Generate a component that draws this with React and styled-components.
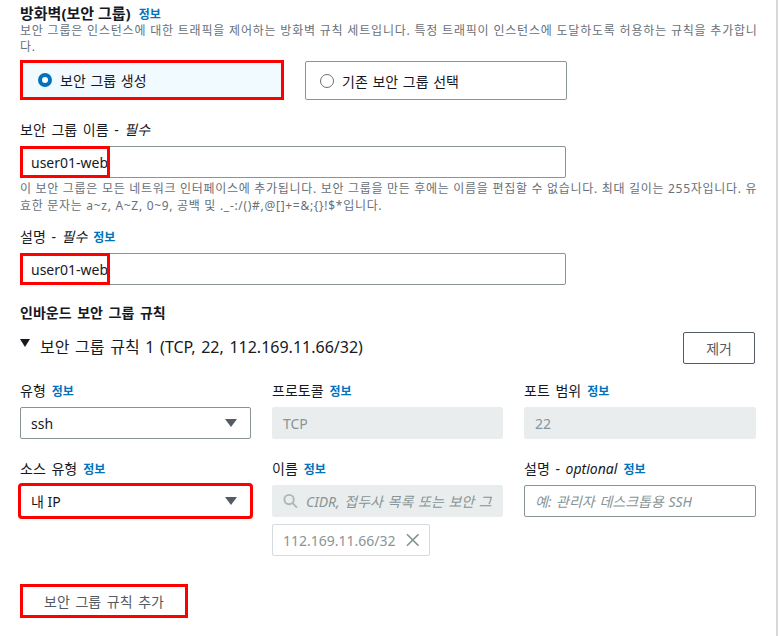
import React from 'react';
import styled, { createGlobalStyle } from 'styled-components';

const GlobalStyle = createGlobalStyle`
  html, body {
    margin: 0;
    padding: 0;
    background: #ffffff;
  }
  body {
    font-family: "Noto Sans", "Noto Sans CJK KR", sans-serif;
    color: #16191f;
  }
`;

const Page = styled.div`
  width: 778px;
  min-height: 636px;
  padding: 3px 0 0 20px;
  box-sizing: border-box;
  border-right: 2px solid #d5dbdb;
`;

const Content = styled.div`
  width: 736px;
`;

const Title = styled.h2`
  margin: 0;
  font-size: 15px;
  line-height: 20px;
  font-weight: 700;
`;

const Info = styled.a`
  color: #0073bb;
  font-size: 12px;
  line-height: 1;
  font-weight: 700;
  font-style: normal;
  margin-left: ${(p) => p.gap || 6}px;
  text-decoration: none;
  word-spacing: 0;
`;

const Desc = styled.p`
  margin: 0;
  font-size: 12px;
  line-height: ${(p) => p.lh || 16}px;
  letter-spacing: ${(p) => p.ls || 0.8}px;
  color: #687078;
  white-space: nowrap;
`;

const TileRow = styled.div`
  display: flex;
  gap: 21px;
  margin-top: 5px;
`;

const Tile = styled.label`
  display: flex;
  align-items: center;
  gap: 8px;
  box-sizing: border-box;
  width: ${(p) => (p.selected ? 264 : 262)}px;
  height: ${(p) => (p.selected ? 40 : 39)}px;
  margin-top: ${(p) => (p.selected ? 0 : 1)}px;
  padding-left: ${(p) => (p.selected ? 15 : 14)}px;
  font-size: 14px;
  word-spacing: 1px;
  background: ${(p) => (p.selected ? '#f1faff' : '#ffffff')};
  border: ${(p) => (p.marked ? '3px solid #ff0000' : '1px solid #879596')};
  border-radius: ${(p) => (p.marked ? 0 : 2)}px;
`;

const Radio = styled.span`
  width: 14px;
  height: 14px;
  border-radius: 50%;
  box-sizing: border-box;
  flex-shrink: 0;
  background: #ffffff;
  border: ${(p) => (p.checked ? '4px solid #0073bb' : '1px solid #687078')};
`;

const Field = styled.div`
  margin-top: ${(p) => p.top || 0}px;
`;

const Label = styled.div`
  font-size: 14px;
  line-height: 20px;
  height: 20px;
  word-spacing: 2px;
  white-space: nowrap;

  em {
    font-style: italic;
  }
`;

const InputBox = styled.div`
  position: relative;
  box-sizing: border-box;
  width: ${(p) => p.width || '100%'};
  height: 32px;
  margin-top: 6px;
  display: flex;
  align-items: center;
  gap: 8px;
  padding: 0 10px;
  font-size: 14px;
  border-radius: 2px;
  border: 1px solid ${(p) => (p.disabled ? '#eaeded' : '#879596')};
  background: ${(p) => (p.disabled ? '#eaeded' : '#ffffff')};
  color: ${(p) => (p.disabled ? '#879596' : '#16191f')};
  outline: ${(p) => (p.marked ? '3px solid #ff0000' : 'none')};
  outline-offset: -1px;
`;

const Placeholder = styled.span`
  font-style: italic;
  color: #879596;
  white-space: nowrap;
  overflow: hidden;
  word-spacing: 1px;
`;

const Mark = styled.span`
  position: absolute;
  left: -1px;
  top: -1px;
  width: ${(p) => p.w}px;
  height: 32px;
  box-sizing: border-box;
  border: 3px solid #ff0000;
`;

const Caret = styled.span`
  margin-left: auto;
  width: 0;
  height: 0;
  border-left: 6px solid transparent;
  border-right: 6px solid transparent;
  border-top: 8px solid #545b64;
  margin-right: 3px;
`;

const Section = styled.div`
  margin-top: 18px;
  font-size: 14px;
  line-height: 20px;
  font-weight: 600;
  word-spacing: 2px;
`;

const RuleHeader = styled.div`
  display: flex;
  align-items: center;
  margin-top: 9px;
  height: 32px;
`;

const RuleTitle = styled.div`
  display: flex;
  align-items: center;
  font-size: 16px;
  gap: 10px;
  word-spacing: 1.5px;
  margin-top: -5px;
`;

const Triangle = styled.span`
  width: 0;
  height: 0;
  border-left: 5px solid transparent;
  border-right: 5px solid transparent;
  border-top: 8px solid #16191f;
  margin-top: -6px;
`;

const Button = styled.button`
  box-sizing: border-box;
  height: ${(p) => (p.marked ? 34 : 32)}px;
  padding: 0 ${(p) => (p.marked ? 21 : 22)}px;
  font-family: inherit;
  font-size: 14px;
  word-spacing: 2px;
  color: #545b64;
  background: #ffffff;
  border: ${(p) => (p.marked ? '3px solid #ff0000' : '1px solid #545b64')};
  border-radius: ${(p) => (p.marked ? 0 : 2)}px;
  margin-left: ${(p) => (p.right ? 'auto' : 0)};
  margin-right: ${(p) => (p.right ? 1 : 0)}px;
`;

const Grid = styled.div`
  display: grid;
  grid-template-columns: 231px 231px 232px;
  column-gap: 21px;
  margin-top: ${(p) => p.top || 0}px;
  align-items: start;
`;

const Token = styled.div`
  margin-top: 7px;
  box-sizing: border-box;
  width: 158px;
  height: 32px;
  display: flex;
  align-items: center;
  padding: 0 10px;
  gap: 10px;
  font-size: 14px;
  color: #879596;
  border: 1px solid #d5dbdb;
  border-radius: 2px;
`;

const Footer = styled.div`
  margin-top: 28px;
`;

const SearchIcon = () => (
  <svg width="16" height="16" viewBox="0 0 16 16" fill="none" stroke="#aab7b8" strokeWidth="2">
    <circle cx="6.5" cy="6.5" r="5" />
    <path d="M10.5 10.5 L15 15" />
  </svg>
);

const CloseIcon = () => (
  <svg width="14" height="14" viewBox="0 0 14 14" fill="none" stroke="#879596" strokeWidth="1.8">
    <path d="M1 1 L13 13 M13 1 L1 13" />
  </svg>
);

const App = () => (
  <Page>
    <GlobalStyle />
    <Content>
      <Title>
        방화벽(보안 그룹)<Info gap={8}>정보</Info>
      </Title>
      <Desc>
        보안 그룹은 인스턴스에 대한 트래픽을 제어하는 방화벽 규칙 세트입니다. 특정 트래픽이 인스턴스에 도달하도록 허용하는 규칙을 추가합니
        <br />
        다.
      </Desc>
      <TileRow>
        <Tile selected marked>
          <Radio checked />
          보안 그룹 생성
        </Tile>
        <Tile>
          <Radio />
          기존 보안 그룹 선택
        </Tile>
      </TileRow>

      <Field top={20}>
        <Label>
          보안 그룹 이름 - <em>필수</em>
        </Label>
        <InputBox width="546px">
          user01-web
          <Mark w={90} />
        </InputBox>
        <Desc lh={17} ls={0.7} style={{ marginTop: 2 }}>
          이 보안 그룹은 모든 네트워크 인터페이스에 추가됩니다. 보안 그룹을 만든 후에는 이름을 편집할 수 없습니다. 최대 길이는 255자입니다. 유
          <br />
          효한 문자는 a~z, A~Z, 0~9, 공백 및 ._-:/()#,@[]+=&amp;;{'{}'}!$*입니다.
        </Desc>
      </Field>

      <Field top={13}>
        <Label>
          설명 - <em>필수</em>
          <Info>정보</Info>
        </Label>
        <InputBox width="546px">
          user01-web
          <Mark w={90} />
        </InputBox>
      </Field>

      <Section>인바운드 보안 그룹 규칙</Section>
      <RuleHeader>
        <RuleTitle>
          <Triangle />
          보안 그룹 규칙 1 (TCP, 22, 112.169.11.66/32)
        </RuleTitle>
        <Button right>제거</Button>
      </RuleHeader>

      <Grid top={17}>
        <Field>
          <Label>
            유형<Info>정보</Info>
          </Label>
          <InputBox>
            ssh
            <Caret />
          </InputBox>
        </Field>
        <Field>
          <Label>
            프로토콜<Info>정보</Info>
          </Label>
          <InputBox disabled>TCP</InputBox>
        </Field>
        <Field>
          <Label>
            포트 범위<Info>정보</Info>
          </Label>
          <InputBox disabled>22</InputBox>
        </Field>
      </Grid>

      <Grid top={20}>
        <Field>
          <Label>
            소스 유형<Info>정보</Info>
          </Label>
          <InputBox marked>
            내 IP
            <Caret />
          </InputBox>
        </Field>
        <Field>
          <Label>
            이름<Info>정보</Info>
          </Label>
          <InputBox disabled>
            <SearchIcon />
            <Placeholder>CIDR, 접두사 목록 또는 보안 그룹</Placeholder>
          </InputBox>
          <Token>
            112.169.11.66/32
            <CloseIcon />
          </Token>
        </Field>
        <Field>
          <Label>
            설명 - <em>optional</em>
            <Info>정보</Info>
          </Label>
          <InputBox>
            <Placeholder>예: 관리자 데스크톱용 SSH</Placeholder>
          </InputBox>
        </Field>
      </Grid>

      <Footer>
        <Button marked>보안 그룹 규칙 추가</Button>
      </Footer>
    </Content>
  </Page>
);

export default App;
